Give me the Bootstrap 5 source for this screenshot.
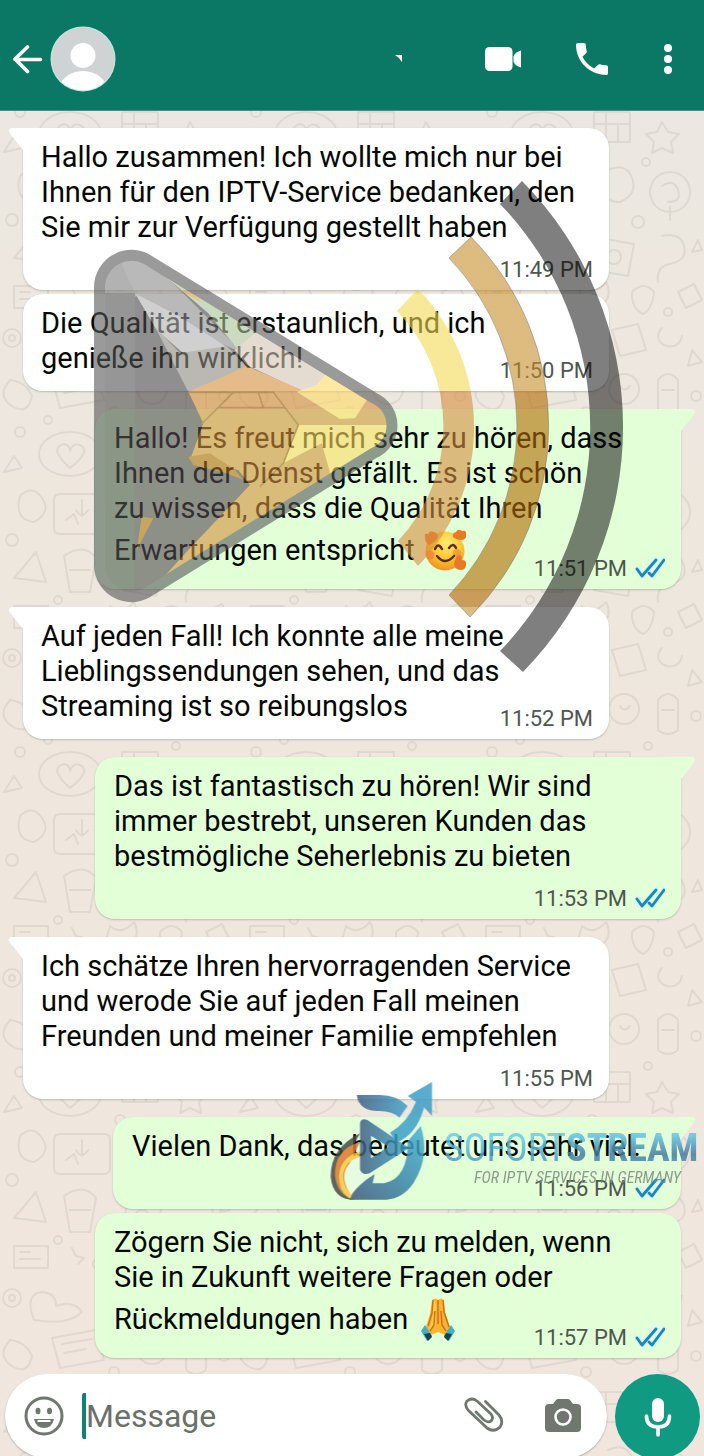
<!DOCTYPE html>
<html lang="de">
<head>
<meta charset="utf-8">
<meta name="viewport" content="width=device-width, initial-scale=1">
<title>Chat</title>
<link href="https://cdn.jsdelivr.net/npm/bootstrap@5.3.0/dist/css/bootstrap.min.css" rel="stylesheet">
<style>
  body { font-family: Roboto, "Noto Sans", sans-serif; background: #efe7de; color: #050805; }
  .chat-app { background: linear-gradient(#ebe7e0, #efe7de 50%, #f0e6dd); isolation: isolate; }
  .chat-header { height: 110px; background: #0b7865; padding: 8px 30px 0 12px; box-shadow: 0 1px 0 #4c8c8c; color: #fff; }
  .icon-btn { padding: 0; border: 0; background: none; color: inherit; line-height: 0; }
  .header-actions { gap: 54px; margin-left: 81px; }
  .chat-log { padding: 18px 23px 16px; }
  .bubble { position: relative; padding: 12px 16px 5px 18px; border-radius: 20px; box-shadow: 0 1px 2px rgba(70, 90, 70, .3); margin-bottom: 18px; font-size: 29px; line-height: 35px; }
  .bubble p { white-space: nowrap; }
  .bubble:last-child { margin-bottom: 0; }
  .bubble.tight { margin-bottom: 4px; }
  .received { background: #fff; margin-right: 72px; }
  .sent { background: #e2ffd8; margin-left: 72px; padding-left: 19px; }
  .sent.narrow { margin-left: 90px; }
  .tail { position: absolute; top: 0; width: 40px; height: 24px; }
  .received .tail { left: -15px; }
  .sent .tail { right: -15px; }
  .emoji-line { height: 48px; gap: 8px; }
  .stamp { font-size: 22px; line-height: 30px; height: 30px; margin-top: 10px; gap: 8px; color: #50564f; }
  .stamp.inline { margin-top: -20px; }
  .composer { padding: 0 4px 0 5px; gap: 8px; height: 82px; overflow: hidden; }
  .pill { height: 84px; min-width: 0; border-radius: 42px; background: #fff; padding: 0 26px 0 19px; color: #70776f; box-shadow: 0 1px 2px rgba(0, 0, 0, .25); }
  .message-box { height: 46px; width: 0; min-width: 0; margin-left: 18px; padding: 0; border: 0; border-left: 4px solid #128072; border-radius: 2px; background: none; font-size: 32px; color: #333; outline: 0; }
  .message-box::placeholder { color: #6a706a; opacity: 1; }
  .camera-btn { margin-left: 41px; }
  .mic-btn { width: 85px; height: 85px; background: #109a82; color: #fff; }
  .overlay { position: absolute; top: 0; left: 0; width: 100%; pointer-events: none; }
  .wallpaper { position: absolute; inset: 0; width: 100%; height: 100%; z-index: -1; }
  .brand-name { font: 38px "Roboto Condensed", Roboto, sans-serif; }
  .brand-name tspan { font-weight: 700; }
  .brand-line { font: italic 16px "Roboto Condensed", Roboto, sans-serif; }
</style>
</head>
<body>
<div class="chat-app position-relative min-vh-100 d-flex flex-column overflow-hidden">

  <svg class="wallpaper" aria-hidden="true">
    <defs>
      <pattern id="doodles" width="236" height="320" patternUnits="userSpaceOnUse">
        <g fill="none" stroke="#8a8378" stroke-opacity=".14" stroke-width="2" stroke-linecap="round" stroke-linejoin="round">
          <circle cx="12" cy="18" r="9"/><circle cx="12" cy="18" r="3"/>
          <path d="M34 40q-10-26 8-28 14 1 14 14 18-6 26 6-14 14-48 8zM96 6q4 20 20 14t12-20M140 10l26-6 8 26-26 6zM190 8c-14 16 16 28 20 8M220 30l10 12-14 4z"/>
          <path d="M10 60q-14 16 2 26t20-10q-6-14-22-16M52 58l44-8 8 30-44 8zM62 64l30-5M64 73l22-4M120 50l12 16-22 4zM152 54a15 15 0 1 0 .1 0zM148 66q4 7 10 0M186 60q10-12 20 0v30q-10 8-20 0zM190 70h12"/>
          <circle cx="48" cy="100" r="4"/><circle cx="114" cy="92" r="5"/><circle cx="224" cy="76" r="5"/><circle cx="176" cy="106" r="4"/><circle cx="20" cy="112" r="5"/>
          <ellipse cx="70" cy="134" rx="31" ry="22"/>
          <path d="M70 148q-22-20-6-24 6 1 6 7 2-8 10-6 12 6-10 23M122 112h36v30h-36zM122 124h36M134 112v30M146 124v18M190 122l6 10 11 2-8 8 2 11-11-5-10 5 2-11-8-8 11-2z"/>
          <path d="M14 136l8 12-18 4zM20 176q12-12 22 2t-8 24q-20-2-14-26M60 174h44q6 0 6 6v28q0 6-6 6H60q-6 0-6-6v-28q0-6 6-6M82 180v16M76 190q6 10 12 0M66 200l8-6 4 10M136 170q18-8 24 8t-12 24q-16 0-18-14M198 172a20 20 0 1 0 .1 0M190 186q12-8 16 4t-10 12M198 206v14"/>
          <circle cx="120" cy="160" r="5"/><circle cx="174" cy="162" r="4"/><circle cx="118" cy="222" r="4"/><circle cx="12" cy="220" r="6"/><circle cx="166" cy="222" r="6"/>
          <path d="M36 232l-22 26 32 4zM64 236q20-14 32 2l-6 34H70zM70 250h20M128 238l34 6-6 32-34-6zM142 250a7 7 0 1 0 .1 0M190 236q18-4 22 10t-14 18q-14 2-12 18M226 240l4 10-10 2z"/>
          <path d="M14 286h34v22H14zM20 292h10M20 299h20M72 288l4 8 8 2-6 6M110 286q12 10 24-4 8 16-8 26t-20-8zM160 292q12-12 22 0-2 18-11 22-12-6-11-22M206 292l16-8 8 16-16 8z"/>
          <circle cx="58" cy="280" r="4"/><circle cx="98" cy="304" r="5"/><circle cx="196" cy="312" r="4"/>
        </g>
      </pattern>
    </defs>
    <rect width="100%" height="100%" fill="url(#doodles)"/>
  </svg>

  <header class="chat-header d-flex align-items-center">
    <button class="icon-btn" aria-label="Back">
      <svg width="32" height="30" viewBox="0 0 32 30" fill="none" stroke="currentColor" stroke-width="3.6" stroke-linecap="round" stroke-linejoin="round"><path d="M28.500 15.500H3M15.500 3 3 15l12.500 12.500"/></svg>
    </button>
    <svg class="ms-1" width="70" height="68" viewBox="0 0 70 68" role="img" aria-label="Profile"><defs><clipPath id="face"><circle cx="35" cy="34" r="31.500"/></clipPath></defs><circle cx="35" cy="34" r="32.500" fill="#bfeadd"/><g clip-path="url(#face)"><path fill="#d0d3d4" d="M0 0h70v68H0z"/><circle cx="35" cy="30.500" r="12.500" fill="#fff"/><ellipse cx="35" cy="66" rx="24" ry="20" fill="#fff"/></g></svg>
    <svg class="ms-auto" width="8" height="8" viewBox="0 0 8 8" aria-hidden="true"><path fill="#fff" d="M0 0h7v7Q5 3 0 0"/></svg>
    <div class="header-actions d-flex align-items-center">
      <button class="icon-btn" aria-label="Video call"><svg width="38" height="26" viewBox="0 0 38 26" fill="currentColor"><rect x="1" y="1" width="27.500" height="24" rx="4.500"/><path d="M29.500 10.500Q31 6 37 4.500v17Q31 20 29.500 15.500z"/></svg></button>
      <button class="icon-btn" aria-label="Voice call"><svg width="32" height="32" viewBox="3 3 18 18" fill="currentColor"><path d="M6.620 10.790c1.440 2.830 3.760 5.140 6.590 6.590l2.200-2.200c.27-.27.670-.36 1.020-.24 1.120.37 2.330.57 3.570.57.55 0 1 .45 1 1V20c0 .55-.45 1-1 1C10.610 21 3 13.390 3 4c0-.55.45-1 1-1h3.500c.55 0 1 .45 1 1 0 1.250.2 2.450.57 3.570.11.35.03.74-.25 1.020z"/></svg></button>
      <button class="icon-btn" aria-label="Menu"><svg width="12" height="32" viewBox="0 0 12 32" fill="currentColor"><circle cx="6" cy="5" r="4"/><circle cx="6" cy="16" r="4"/><circle cx="6" cy="27" r="4"/></svg></button>
    </div>
  </header>

  <main class="chat-log flex-grow-1">
    <article class="bubble received tight">
      <svg class="tail" viewBox="0 0 40 24" fill="#fff"><path d="M40 0H4Q-2 1 3 7l12 15 25 2z"/></svg>
      <p class="mb-0 position-relative">Hallo zusammen! Ich wollte mich nur bei<br>Ihnen für den IPTV-Service bedanken, den<br>Sie mir zur Verfügung gestellt haben</p>
      <div class="stamp d-flex justify-content-end"><time>11:49 PM</time></div>
    </article>
    <article class="bubble received">
      <p class="mb-0">Die Qualität ist erstaunlich, und ich<br>genieße ihn wirklich!</p>
      <div class="stamp inline d-flex justify-content-end"><time>11:50 PM</time></div>
    </article>
    <article class="bubble sent">
      <svg class="tail" viewBox="0 0 40 24" fill="#e2ffd8"><path d="M0 0h36q6 1 1 7L25 22 0 24z"/></svg>
      <p class="mb-0">Hallo! Es freut mich sehr zu hören, dass<br>Ihnen der Dienst gefällt. Es ist schön<br>zu wissen, dass die Qualität Ihren</p>
      <div class="emoji-line d-flex align-items-center"><span>Erwartungen entspricht</span>
        <svg width="44" height="44" viewBox="0 0 44 44" role="img" aria-label="Lächelndes Gesicht">
          <defs><radialGradient id="skin" cx=".55" cy=".3" r=".75"><stop offset="0" stop-color="#ffec78"/><stop offset=".55" stop-color="#fcc42c"/><stop offset="1" stop-color="#ee8a22"/></radialGradient></defs>
          <circle cx="22" cy="23" r="19.500" fill="url(#skin)"/>
          <path fill="#e97a25" d="M2 9q-1-4 3-3 2-4 6-2 4 1 4 5-1 4-9 8-4-2-4-8M33 4q2-4 6-1 5-1 4 4 1 4-4 5-6 0-9-3-1-4 3-5M35 27q4-1 4 5 5 0 4 5 0 5-6 5-6-1-6-6 1-6 4-9"/>
          <circle cx="7" cy="27" r="4.500" fill="#f08030" opacity=".75"/><circle cx="34" cy="25" r="4" fill="#f08030" opacity=".6"/>
          <path d="M12 21q3-7 7 0M26 20q4-6 7 0M14 28q8 10 17 0" fill="none" stroke="#5a2e12" stroke-width="2.500" stroke-linecap="round"/>
        </svg></div>
      <div class="stamp inline d-flex justify-content-end"><time>11:51 PM</time><svg width="30" height="28" viewBox="0 0 30 28"><use href="#ticks"/></svg></div>
    </article>
    <article class="bubble received">
      <svg class="tail" viewBox="0 0 40 24" fill="#fff"><path d="M40 0H4Q-2 1 3 7l12 15 25 2z"/></svg>
      <p class="mb-0 position-relative">Auf jeden Fall! Ich konnte alle meine<br>Lieblingssendungen sehen, und das<br>Streaming ist so reibungslos</p>
      <div class="stamp inline d-flex justify-content-end"><time>11:52 PM</time></div>
    </article>
    <article class="bubble sent">
      <svg class="tail" viewBox="0 0 40 24" fill="#e2ffd8"><path d="M0 0h36q6 1 1 7L25 22 0 24z"/></svg>
      <p class="mb-0">Das ist fantastisch zu hören! Wir sind<br>immer bestrebt, unseren Kunden das<br>bestmögliche Seherlebnis zu bieten</p>
      <div class="stamp d-flex justify-content-end"><time>11:53 PM</time><svg width="30" height="28" viewBox="0 0 30 28"><use href="#ticks"/></svg></div>
    </article>
    <article class="bubble received">
      <svg class="tail" viewBox="0 0 40 24" fill="#fff"><path d="M40 0H4Q-2 1 3 7l12 15 25 2z"/></svg>
      <p class="mb-0 position-relative">Ich schätze Ihren hervorragenden Service<br>und werode Sie auf jeden Fall meinen<br>Freunden und meiner Familie empfehlen</p>
      <div class="stamp d-flex justify-content-end"><time>11:55 PM</time></div>
    </article>
    <article class="bubble sent narrow tight">
      <svg class="tail" viewBox="0 0 40 24" fill="#e2ffd8"><path d="M0 0h36q6 1 1 7L25 22 0 24z"/></svg>
      <p class="mb-0 position-relative">Vielen Dank, das bedeutet uns sehr viel.</p>
      <div class="stamp d-flex justify-content-end"><time>11:56 PM</time><svg width="30" height="28" viewBox="0 0 30 28"><use href="#ticks"/></svg></div>
    </article>
    <article class="bubble sent">
      <p class="mb-0">Zögern Sie nicht, sich zu melden, wenn<br>Sie in Zukunft weitere Fragen oder</p>
      <div class="emoji-line d-flex align-items-center"><span>Rückmeldungen haben</span>
        <svg width="44" height="44" viewBox="-2 0 44 44" role="img" aria-label="Gefaltete Hände">
          <path fill="#f7b62d" d="M14 3q4-3 6 0 3-3 6 0l1 12 6 18-6 5-7-3-7 3-6-5 5-16z"/>
          <path fill="#fdcf45" d="M16 3q3 0 2 14l-1 12-6 4 4-15z"/>
          <path d="M20 3v24M17 14l-1 14-4 6M23 14l1 14 4 6M25 3l1 12 5 15M15 3l-1 13-4 13" fill="none" stroke="#d8691b" stroke-width="1.400"/>
          <path fill="#46afc6" d="M7 28 14 39 9 44 3 34zM33 28 26 39 31 44 37 34z"/><path fill="#12454c" d="M6 37l6-1 2 4-4 4zM34 37l-6-1-2 4 4 4z"/>
        </svg></div>
      <div class="stamp inline d-flex justify-content-end"><time>11:57 PM</time><svg width="30" height="28" viewBox="0 0 30 28"><use href="#ticks"/></svg></div>
    </article>
  </main>

  <footer class="composer d-flex">
    <div class="pill flex-grow-1 d-flex align-items-center">
      <button class="icon-btn" aria-label="Emoji"><svg width="40" height="40" viewBox="0 0 40 40" fill="currentColor"><circle cx="20" cy="20" r="18" fill="none" stroke="currentColor" stroke-width="3"/><ellipse cx="14" cy="15" rx="2.500" ry="3.200"/><ellipse cx="25.500" cy="15" rx="2.500" ry="3.200"/><path d="M10 23h20q-2 9-10 9t-10-9"/><path d="M13.500 25h13" stroke="#fff" stroke-width="2"/></svg></button>
      <input class="message-box flex-grow-1" type="text" placeholder="Message" aria-label="Message">
      <button class="icon-btn" aria-label="Attach"><svg width="40" height="38" viewBox="0 0 40 38" fill="none" stroke="currentColor" stroke-width="2.800" stroke-linecap="round" stroke-linejoin="round"><path d="M21.500 4.500 35 18q5 6 1 12-6 6-13 1L4 13Q0 8 3 4q5-4 10 0l14 13q3 4 0 7-3 2-7-1l-8-8"/></svg></button>
      <button class="icon-btn camera-btn" aria-label="Camera"><svg width="36" height="36" viewBox="0 0 36 36"><path fill="currentColor" d="M11 2q1-1 2-1h10q1 0 2 1l3 4h4q4 0 4 4v20q0 4-4 4H4q-4 0-4-4V10q0-4 4-4h4z"/><circle cx="18" cy="19" r="7.500" fill="currentColor" stroke="#fff" stroke-width="2.600"/></svg></button>
    </div>
    <button class="mic-btn icon-btn rounded-circle flex-shrink-0" aria-label="Voice message"><svg width="28" height="40" viewBox="0 0 28 40"><rect x="8" y="1" width="12" height="24" rx="6" fill="currentColor"/><path d="M2.500 19q0 11 11.500 11t11.500-11M14 30v8" fill="none" stroke="currentColor" stroke-width="3.600" stroke-linecap="round"/></svg></button>
  </footer>

  <svg class="overlay" viewBox="0 0 704 1456" aria-hidden="true">
    <defs>
      <g id="ticks" fill="none" stroke-linecap="round" stroke-linejoin="round"><path stroke="#c4f6ff" stroke-width="5" d="M2 15l5 7L21 6M14 19l3 3L29 6"/><path stroke="#2184b5" stroke-width="2.800" d="M2 15l5 7L21 6M14 19l3 3L29 6"/></g>
      <clipPath id="playShape"><path d="M99.500 287A32 32 0 0 1 151 262L374 398A30 30 0 0 1 374 453L151 590A32 32 0 0 1 99.500 565z"/></clipPath>
      <linearGradient id="shade" gradientUnits="userSpaceOnUse" x1="0" y1="0" x2="0" y2="1140"><stop offset=".471" stop-color="#484646"/><stop offset=".471" stop-color="#544850"/></linearGradient>
      <linearGradient id="waveMid" gradientUnits="userSpaceOnUse" x1="0" y1="237" x2="0" y2="617"><stop offset=".405" stop-color="#c68e2b"/><stop offset=".405" stop-color="#b26a00"/><stop offset=".974" stop-color="#b26a00"/><stop offset=".974" stop-color="#c68e2b"/></linearGradient>
      <linearGradient id="waveIn" gradientUnits="userSpaceOnUse" x1="0" y1="289" x2="0" y2="566"><stop offset=".368" stop-color="#f2da53"/><stop offset=".368" stop-color="#d68e40"/></linearGradient>
      <linearGradient id="brandLight" x1="0" y1="0" x2="0" y2="1"><stop offset=".3" stop-color="#66cbe8"/><stop offset="1" stop-color="#3a87bb"/></linearGradient>
      <linearGradient id="brandDark" x1="0" y1="0" x2="0" y2="1"><stop offset=".2" stop-color="#62c6e4"/><stop offset=".65" stop-color="#43799f"/><stop offset="1" stop-color="#4da3c6"/></linearGradient>
      <linearGradient id="steel" x1="0" y1="0" x2="1" y2="0"><stop offset="0" stop-color="#3f5f84"/><stop offset="1" stop-color="#3fa3cb"/></linearGradient>
      <linearGradient id="steelBack" x1="1" y1="0" x2="0" y2="1"><stop offset="0" stop-color="#48b2d6"/><stop offset=".5" stop-color="#3786ac"/><stop offset="1" stop-color="#40567c"/></linearGradient>
    </defs>

    <g opacity=".6">
      <g clip-path="url(#playShape)">
        <g transform="translate(80 230) scale(.3333)">
          <path fill="url(#shade)" d="M0 0h990v1140H0z"/>
          <path fill="#808080" d="M60 60h80l30 140-105-10z"/>
          <path fill="#505250" d="M60 190h105v900H60z"/>
          <path fill="#8c8c8c" d="M120 90l30-30h90l30 90 110 110 110 110-90-40-100-65-135-75z"/>
          <path fill="#b2b2b2" d="M165 190l135 70 140 90-130 20-80-70z"/>
          <path fill="#8c8a80" d="M225 290l75 80 140-22 60 62-115 72h-62z"/>
          <path fill="#abc496" d="M240 125l140 80 160 105-65 50-90-110z"/>
          <path fill="#d99d3c" d="M300 180l35 0 30 38z"/>
          <path fill="#d5c6b4" d="M465 360l65-55 330 185H680L500 405z"/>
          <path fill="#d4903c" d="M325 485 430 440l70-32 180 78h260v110L740 760 220 1075l110-120 180-190-35-45-145-30 40-110z"/>
          <path fill="#ffda66" d="M650 485l60-20 30-35 130 65-45 70-45 2zM655 585h270v60L755 745l-30-105-115 60z"/>
          <path fill="#b36a10" d="M325 680l65-10 75 50 25 30-50-20-100-25zM185 860l35 5-50 95z"/>
          <path fill="none" stroke="#9a6510" stroke-width="5" d="M325 487h255l75 98-45 115-70 70M460 487l-95 95M415 533h200M535 487l15 46"/>
        </g>
      </g>
      <path fill="none" stroke="#585858" stroke-width="11" d="M99.500 287A32 32 0 0 1 151 262L374 398A30 30 0 0 1 374 453L151 590A32 32 0 0 1 99.500 565z"/>
    </g>
    <path fill="#000" fill-opacity=".5" d="M522 181A350 350 0 0 1 523 672L500 651A322 322 0 0 0 500 204z"/>
    <path fill="url(#waveMid)" fill-opacity=".6" stroke="#777" stroke-opacity=".5" d="M471 237A270 270 0 0 1 470 617L449 595A243 243 0 0 0 449 258z"/>
    <path fill="url(#waveIn)" fill-opacity=".6" d="M418 289A199 199 0 0 1 418 566L398 541A167 167 0 0 0 397 311z"/>

    <g opacity=".85">
      <g transform="translate(320 1070) scale(.3333)">
        <path fill="#444a4a" d="M120 190Q30 235 32 322q8 68 70 68L118 370 60 300z"/>
        <path fill="#df7529" d="M120 216Q42 238 45 318q8 62 60 71l20-20-50-60z"/>
        <path fill="#fbc83e" d="M120 244q-62 20-63 76 2 60 50 71l12-6q-46-14-50-66 4-46 51-58z"/>
        <path fill="#e8fbe0" d="M120 262q-46 16-48 60 4 34 22 52 26-36 68-60h-30z"/>
        <path fill="url(#steelBack)" d="M302 168q30 90-22 172-32 46-80 49H88q18-42 76-77l-6 28h35q72-16 70-126z"/>
        <path fill="url(#steel)" d="M110 75h70q50 0 83 33l-25 35q-20-20-60-20-60 2-68-48z"/>
        <path fill="url(#steel)" fill-rule="evenodd" d="M120 160q3-18 22-10l125 84-118 76q-24 8-29-12zM153 197v68l52-35z"/>
        <path fill="#3c9fc9" d="M263 78 336 36v102l-24-26q-20 80-82 106l-20-30q52-30 78-93z"/>
      </g>
      <text class="brand-name" x="444" y="1161" fill="url(#brandLight)">SOFORT<tspan fill="url(#brandDark)">STREAM</tspan></text>
      <text class="brand-line" x="474" y="1183" fill="#7f8780">FOR IPTV SERVICES IN GERMANY</text>
    </g>
  </svg>
</div>
<script src="https://cdn.jsdelivr.net/npm/bootstrap@5.3.0/dist/js/bootstrap.bundle.min.js"></script>
</body>
</html>
